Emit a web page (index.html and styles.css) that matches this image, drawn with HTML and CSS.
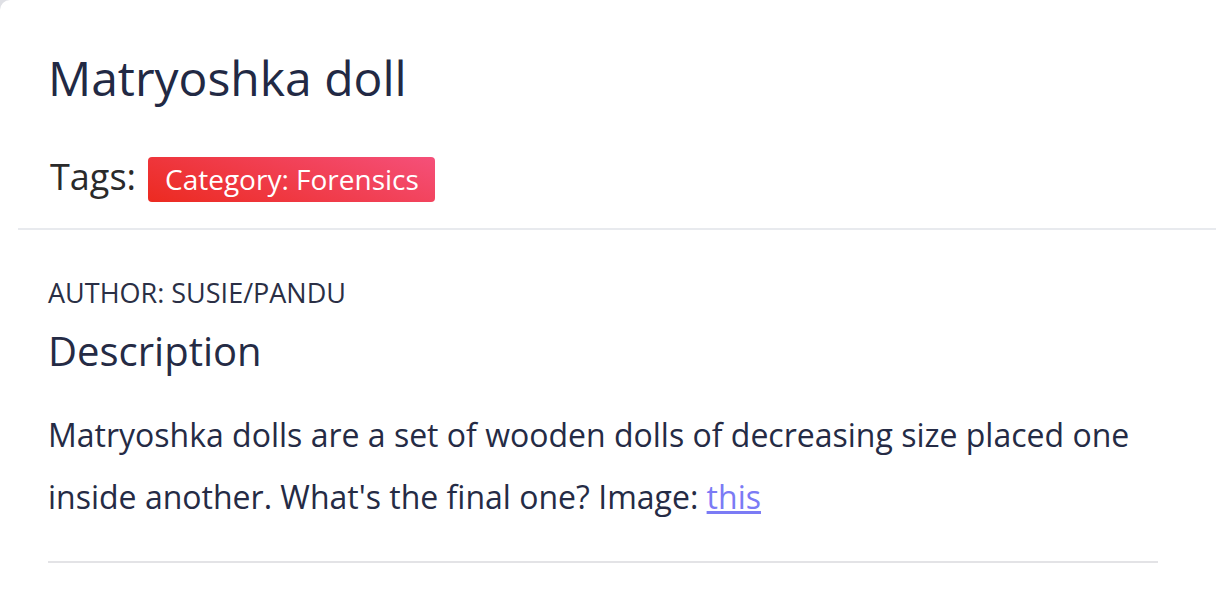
FILE: index.html
```html
<!DOCTYPE html>
<html>
<head>
<meta charset="utf-8">
<link rel="stylesheet" href="styles.css">
</head>
<body>
<div class="card">
  <div class="header">
    <h1 class="title">Matryoshka doll</h1>
    <div class="tags">
      <span class="tags-label">Tags:</span>
      <span class="badge">Category: Forensics</span>
    </div>
  </div>
  <div class="content">
    <div class="author">AUTHOR: SUSIE/PANDU</div>
    <h2 class="section-title">Description</h2>
    <p class="desc">Matryoshka dolls are a set of wooden dolls of decreasing size placed one inside another. What's the final one? Image: <a href="#" class="link">this</a></p>
    <hr class="rule">
  </div>
</div>
</body>
</html>
```

FILE: styles.css
```css
html, body {
  margin: 0;
  padding: 0;
}
body {
  background: #dfe0e5;
  font-family: "Open Sans", "Noto Sans", sans-serif;
  color: #252b45;
  width: 1216px;
  height: 606px;
  overflow: hidden;
}
.card {
  background: #ffffff;
  border-top-left-radius: 10px;
  height: 606px;
}
.header {
  margin-left: 18px;
  padding: 46px 0 26px 30px;
  border-bottom: 2px solid #e8eaee;
}
.title {
  margin: 0;
  font-size: 48px;
  font-weight: 400;
  line-height: 64px;
  color: #222944;
}
.tags {
  display: flex;
  align-items: baseline;
  margin-top: 47px;
}
.tags-label {
  font-size: 36px;
  color: #2a2a2a;
  margin-left: 2px;
  margin-right: 12px;
  line-height: 38px;
}
.badge {
  display: inline-block;
  background: linear-gradient(20deg, #ec2a20 0%, #f5507a 100%);
  color: #fff;
  font-size: 28px;
  line-height: 45px;
  padding: 0 16px 0 17px;
  border-radius: 4px;
}
.content {
  padding: 45px 58px 0 48px;
}
.author {
  font-size: 27px;
  line-height: 36px;
  color: #2a2f45;
  text-transform: uppercase;
}
.section-title {
  margin: 13px 0 0;
  font-size: 40px;
  font-weight: 400;
  line-height: 54px;
  color: #252b45;
}
.desc {
  margin: 26px 0 0;
  font-size: 32px;
  line-height: 62px;
  color: #252b45;
}
.link {
  color: #7b7bf5;
  text-decoration: underline;
}
.rule {
  margin: 33px 0 0;
  border: 0;
  border-top: 2px solid #e3e3e6;
}
```
